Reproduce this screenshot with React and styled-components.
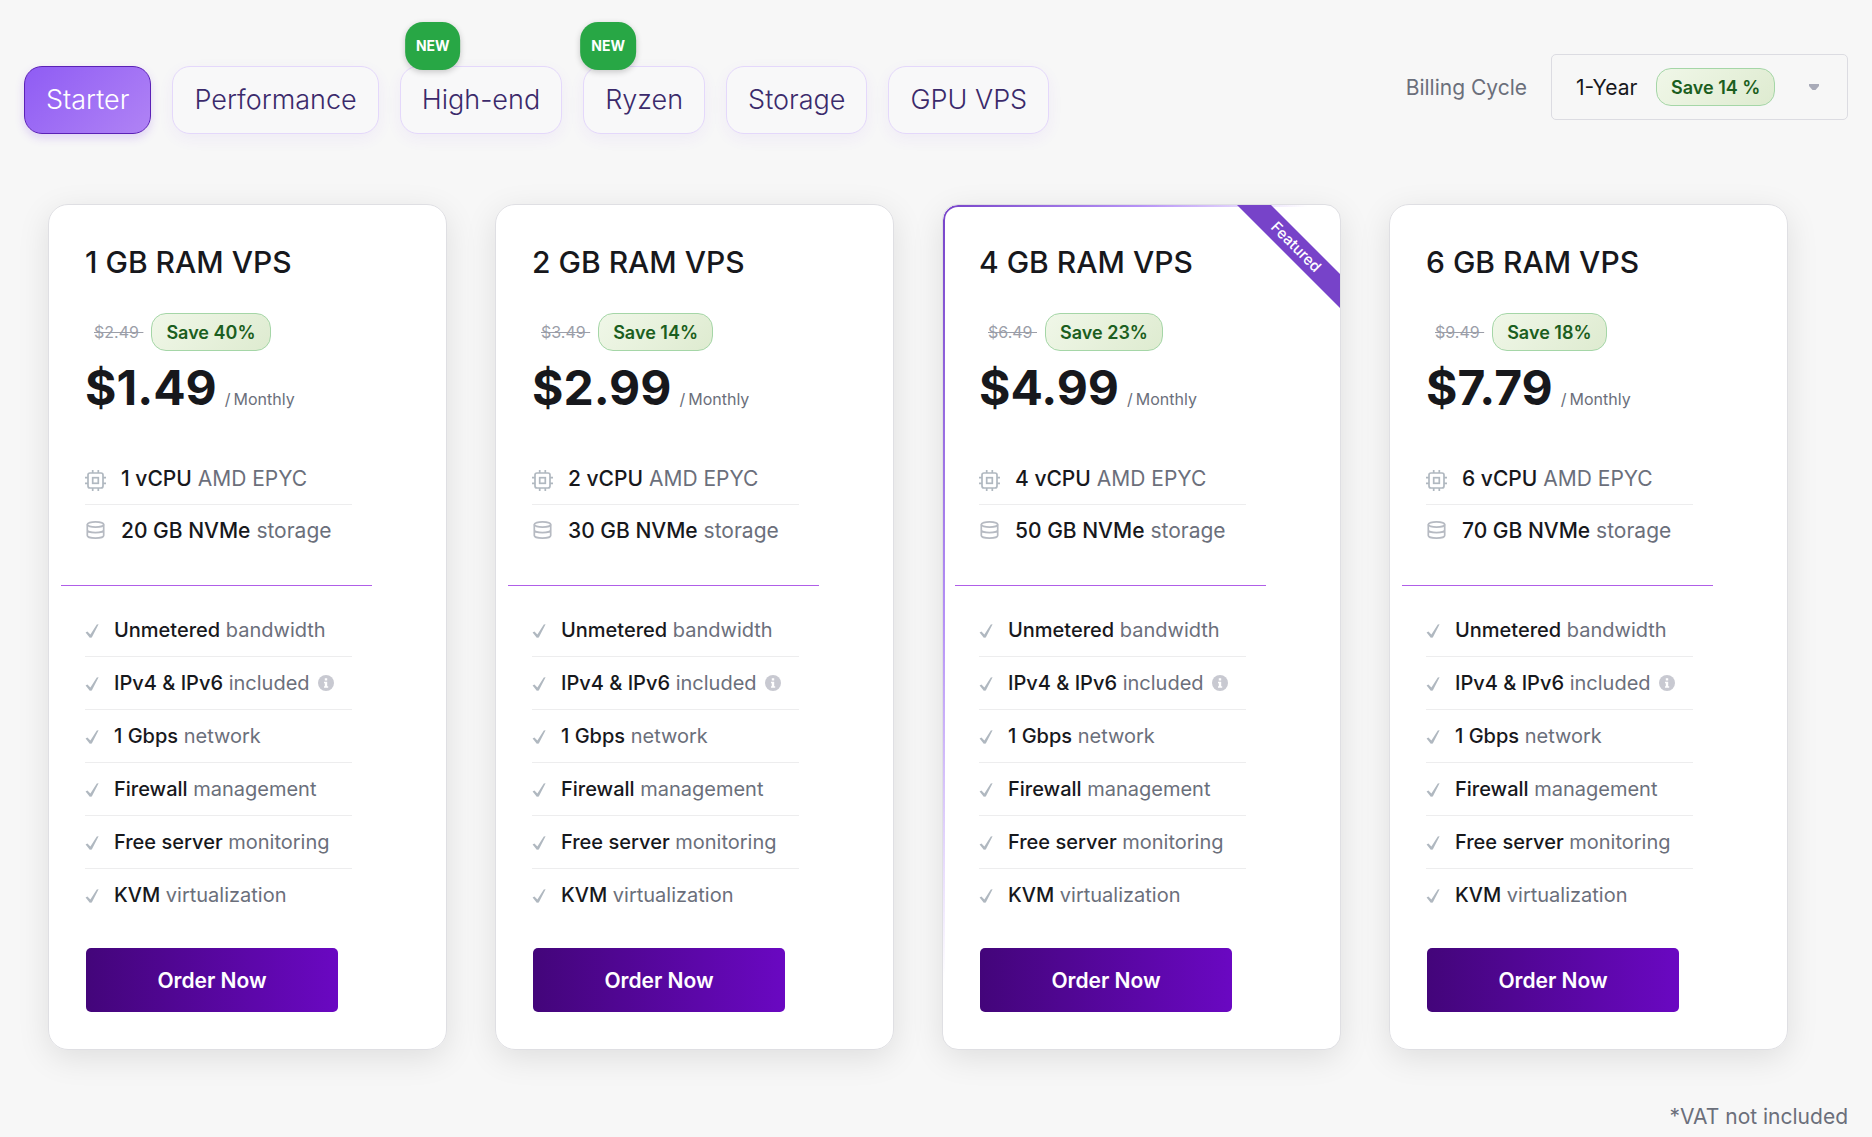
import React from "react";
import styled, { createGlobalStyle, css } from "styled-components";

const GlobalStyle = createGlobalStyle`
  *, *::before, *::after { box-sizing: border-box; }
  body {
    margin: 0;
    background: #f7f7f7;
    color: #17181c;
    font-family: Inter, "Liberation Sans", sans-serif;
    -webkit-font-smoothing: antialiased;
  }
`;

const Page = styled.main`
  padding: 54px 24px 0;
`;

const TopBar = styled.header`
  display: flex;
  justify-content: space-between;
  align-items: flex-start;
`;

const Tabs = styled.nav`
  display: flex;
  gap: 21px;
  padding-top: 12px;
`;

const Tab = styled.button`
  position: relative;
  height: 68px;
  padding: 0 21px;
  border: 1px solid #e4d8fb;
  border-radius: 18px;
  background: #f8f8f9;
  color: #3b2a6b;
  font: 300 27px/32px Inter, "Liberation Sans", sans-serif;
  white-space: nowrap;
  cursor: pointer;
  box-shadow: 0 5px 16px rgba(124, 58, 237, 0.06);
  ${({ $active }) =>
    $active &&
    css`
      border-color: #5b21b6;
      background: linear-gradient(135deg, #8f5cf4, #b083f5);
      color: #fff;
      box-shadow: 0 4px 10px rgba(124, 58, 237, 0.2);
    `}
`;

const NewBadge = styled.span`
  position: absolute;
  left: 20%;
  bottom: 63px;
  transform: translateX(-50%);
  padding: 15px 11px;
  border-radius: 18px;
  background: #28a745;
  color: #fff;
  font-size: 14px;
  font-weight: 700;
  line-height: 18px;
  box-shadow: 0 2px 6px rgba(0, 0, 0, 0.2);
`;

const Billing = styled.div`
  display: flex;
  align-items: center;
  gap: 24px;
`;

const BillingLabel = styled.label`
  color: #6b6f7b;
  font-size: 21px;
  line-height: 25px;
`;

const SelectBox = styled.div`
  display: grid;
  grid-template-columns: 105px auto 1fr;
  align-items: center;
  width: 297px;
  height: 66px;
`;

const CycleSelect = styled.select`
  grid-area: 1 / 1 / 2 / 4;
  width: 100%;
  height: 100%;
  padding: 0 24px;
  border: 1px solid #dcdce2;
  border-radius: 5px;
  background: transparent;
  color: #17181c;
  appearance: none;
  font: 400 21px/25px Inter, "Liberation Sans", sans-serif;
  cursor: pointer;
`;

const SavePill = styled.span`
  display: inline-block;
  height: 38px;
  padding: 0 14px;
  border: 1px solid #a5d6a7;
  border-radius: 15px;
  background: linear-gradient(135deg, #f0f7e8, #deebd0);
  color: #1b5e20;
  font-size: 18px;
  font-weight: 600;
  line-height: 37px;
  white-space: nowrap;
`;

const SelectPill = styled(SavePill)`
  grid-area: 1 / 2;
  pointer-events: none;
`;

const Caret = styled.svg`
  grid-area: 1 / 3;
  justify-self: end;
  margin-right: 28px;
  pointer-events: none;
`;

const Plans = styled.section`
  display: grid;
  grid-template-columns: repeat(4, 1fr);
  gap: 48px;
  padding: 70px 60px 0 24px;
`;

const Card = styled.article`
  position: relative;
  overflow: hidden;
  padding: 39px 36px 37px;
  border: 1px solid #dfdfe3;
  border-radius: 20px;
  background: #fff;
`;

const CardShell = styled.div`
  border-radius: 20px;
  box-shadow: 0 8px 32px rgba(0, 0, 0, 0.1);
  ${({ $featured }) =>
    $featured &&
    css`
      ${Card} {
        border-radius: 16px;
      }
      ${Card}::before {
        content: "";
        position: absolute;
        inset: 0;
        padding: 2px;
        border-radius: 15px;
        background: linear-gradient(to bottom right, #7743c9, #b692f6 25%, rgba(182, 146, 246, 0) 46%);
        mask: linear-gradient(#000 0 0) content-box exclude, linear-gradient(#000 0 0);
        pointer-events: none;
      }
    `}
`;

const Ribbon = styled.span`
  position: absolute;
  top: 30px;
  right: -36px;
  width: 160px;
  transform: rotate(45deg);
  background: #7743c9;
  color: #fff;
  font-size: 15px;
  font-weight: 500;
  line-height: 24px;
  text-align: center;
`;

const PlanName = styled.h2`
  margin: 0;
  font-size: 30px;
  font-weight: 500;
  line-height: 36px;
`;

const Discount = styled.div`
  display: flex;
  align-items: center;
  gap: 8px;
  margin-top: 33px;
  padding-left: 9px;
`;

const OldPrice = styled.s`
  color: #9b9ea8;
  font-size: 16px;
  line-height: 20px;
  white-space: pre;
`;

const PriceRow = styled.div`
  display: flex;
  align-items: baseline;
  gap: 8px;
  margin-top: 7px;
`;

const Price = styled.strong`
  font-size: 48px;
  font-weight: 700;
  line-height: 60px;
`;

const Period = styled.span`
  display: flex;
  gap: 3px;
  color: #6b6f7b;
  font-size: 16px;
  line-height: 20px;
`;

const List = styled.ul`
  width: 82%;
  margin: 0;
  padding: 0;
  list-style: none;
`;

const SpecList = styled(List)`
  margin-top: 35px;
`;

const FeatureList = styled(List)`
  margin-top: 17px;
`;

const Row = styled.li`
  display: flex;
  align-items: center;
  gap: 15px;
  color: #6b6f7b;
  white-space: nowrap;
  & + & {
    border-top: 1px solid #ededee;
  }
  svg {
    flex: none;
  }
  b {
    color: #17181c;
    font-weight: 500;
  }
`;

const SpecRow = styled(Row)`
  height: 51px;
  font-size: 21px;
  line-height: 25px;
`;

const FeatureRow = styled(Row)`
  height: 53px;
  font-size: 20px;
  line-height: 24px;
`;

const FeatureText = styled.span`
  display: flex;
  align-items: center;
  gap: 8px;
`;

const InfoButton = styled.button`
  display: flex;
  margin: 0;
  padding: 0;
  border: 0;
  background: none;
  cursor: pointer;
`;

const Divider = styled.hr`
  width: calc((100% + 48px) * 5 / 6);
  height: 1px;
  margin: 30px 0 0 -24px;
  border: 0;
  background: #b05ee8;
`;

const OrderButton = styled.button`
  display: block;
  width: 252px;
  height: 64px;
  margin: 27px 0 0 1px;
  border: 0;
  border-radius: 5px;
  background: linear-gradient(90deg, #43057a, #6a08c2);
  color: #fff;
  font: 600 21px/25px Inter, "Liberation Sans", sans-serif;
  cursor: pointer;
`;

const VatNote = styled.p`
  margin: 54px 0 0;
  color: #6b6f7b;
  font-size: 21px;
  line-height: 25px;
  text-align: right;
`;

const CpuIcon = () => (
  <svg width="21" height="24" viewBox="0 0 21 24" fill="none" stroke="#b0b8c0" strokeWidth="1.7" aria-hidden="true">
    <rect x="3" y="6" width="15" height="15" rx="2" />
    <rect x="7.7" y="10.7" width="5.6" height="5.6" />
    <path d="M7.7 3v3M13.3 3v3M7.7 21v3M13.3 21v3M0 10.7h3M0 16.3h3M18 10.7h3M18 16.3h3" />
  </svg>
);

const DiskIcon = () => (
  <svg width="21" height="20" viewBox="0 0 21 20" fill="none" stroke="#b6bac2" strokeWidth="1.7" aria-hidden="true">
    <ellipse cx="10.5" cy="4.5" rx="8.2" ry="2.7" />
    <path d="M2.3 4.5v11c0 1.5 3.6 2.7 8.2 2.7s8.2-1.2 8.2-2.7v-11M2.3 10c0 1.5 3.6 2.7 8.2 2.7s8.2-1.2 8.2-2.7" />
  </svg>
);

const CheckIcon = () => (
  <svg width="14" height="18" viewBox="0 0 14 18" fill="#b0b8c0" aria-hidden="true">
    <path d="M.6 11.6 2.4 10.4 5.4 13.6 11.8 3.6 13.6 3.2 6.8 16.4 4.8 16.8Z" />
  </svg>
);

const InfoIcon = () => (
  <svg width="16" height="16" viewBox="0 0 16 16" aria-hidden="true">
    <circle cx="8" cy="8" r="8" fill="#c8c9d1" />
    <path d="M6.8 3.2h2.4v2.2H6.8zM6 6.8h3.2v4.4h1v1.6H6v-1.6h.8V8.2H6z" fill="#fff" />
  </svg>
);

const tabs = [
  { name: "Starter", active: true },
  { name: "Performance" },
  { name: "High-end", isNew: true },
  { name: "Ryzen", isNew: true },
  { name: "Storage" },
  { name: "GPU VPS" },
];

const plans = [
  { ram: 1, old: "$2.49", save: 40, price: "$1.49", cpu: 1, disk: 20 },
  { ram: 2, old: "$3.49", save: 14, price: "$2.99", cpu: 2, disk: 30 },
  { ram: 4, old: "$6.49", save: 23, price: "$4.99", cpu: 4, disk: 50, featured: true },
  { ram: 6, old: "$9.49", save: 18, price: "$7.79", cpu: 6, disk: 70 },
];

const features = [
  ["Unmetered", "bandwidth"],
  ["IPv4 & IPv6", "included", true],
  ["1 Gbps", "network"],
  ["Firewall", "management"],
  ["Free server", "monitoring"],
  ["KVM", "virtualization"],
];

function PlanCard({ plan }) {
  return (
    <CardShell $featured={plan.featured}>
      <Card>
        {plan.featured && <Ribbon>Featured</Ribbon>}
        <PlanName>{plan.ram} GB RAM VPS</PlanName>
        <Discount>
          <OldPrice>{plan.old + " "}</OldPrice>
          <SavePill>Save {plan.save}%</SavePill>
        </Discount>
        <PriceRow>
          <Price>{plan.price}</Price>
          <Period>
            <span>/</span>
            <span>Monthly</span>
          </Period>
        </PriceRow>
        <SpecList>
          <SpecRow>
            <CpuIcon />
            <span><b>{plan.cpu} vCPU</b> AMD EPYC</span>
          </SpecRow>
          <SpecRow>
            <DiskIcon />
            <span><b>{plan.disk} GB NVMe</b> storage</span>
          </SpecRow>
        </SpecList>
        <Divider />
        <FeatureList>
          {features.map(([bold, rest, info]) => (
            <FeatureRow key={bold}>
              <CheckIcon />
              <FeatureText>
                <span><b>{bold}</b> {rest}</span>
                {info && (
                  <InfoButton type="button" aria-label="More information">
                    <InfoIcon />
                  </InfoButton>
                )}
              </FeatureText>
            </FeatureRow>
          ))}
        </FeatureList>
        <OrderButton type="button">Order Now</OrderButton>
      </Card>
    </CardShell>
  );
}

export default function App() {
  return (
    <>
      <GlobalStyle />
      <Page>
        <TopBar>
          <Tabs aria-label="VPS type">
            {tabs.map((tab) => (
              <Tab key={tab.name} type="button" $active={tab.active}>
                {tab.isNew && <NewBadge>NEW</NewBadge>}
                {tab.name}
              </Tab>
            ))}
          </Tabs>
          <Billing>
            <BillingLabel htmlFor="billing-cycle">Billing Cycle</BillingLabel>
            <SelectBox>
              <CycleSelect id="billing-cycle" defaultValue="1-Year">
                <option>1-Year</option>
              </CycleSelect>
              <SelectPill>Save 14 %</SelectPill>
              <Caret width="12" height="8" viewBox="0 0 12 8" aria-hidden="true">
                <path d="M1 1h10v2L7.5 7h-3L1 3z" fill="#a9abb8" />
              </Caret>
            </SelectBox>
          </Billing>
        </TopBar>
        <Plans>
          {plans.map((plan) => (
            <PlanCard key={plan.ram} plan={plan} />
          ))}
        </Plans>
        <VatNote>*VAT not included</VatNote>
      </Page>
    </>
  );
}
